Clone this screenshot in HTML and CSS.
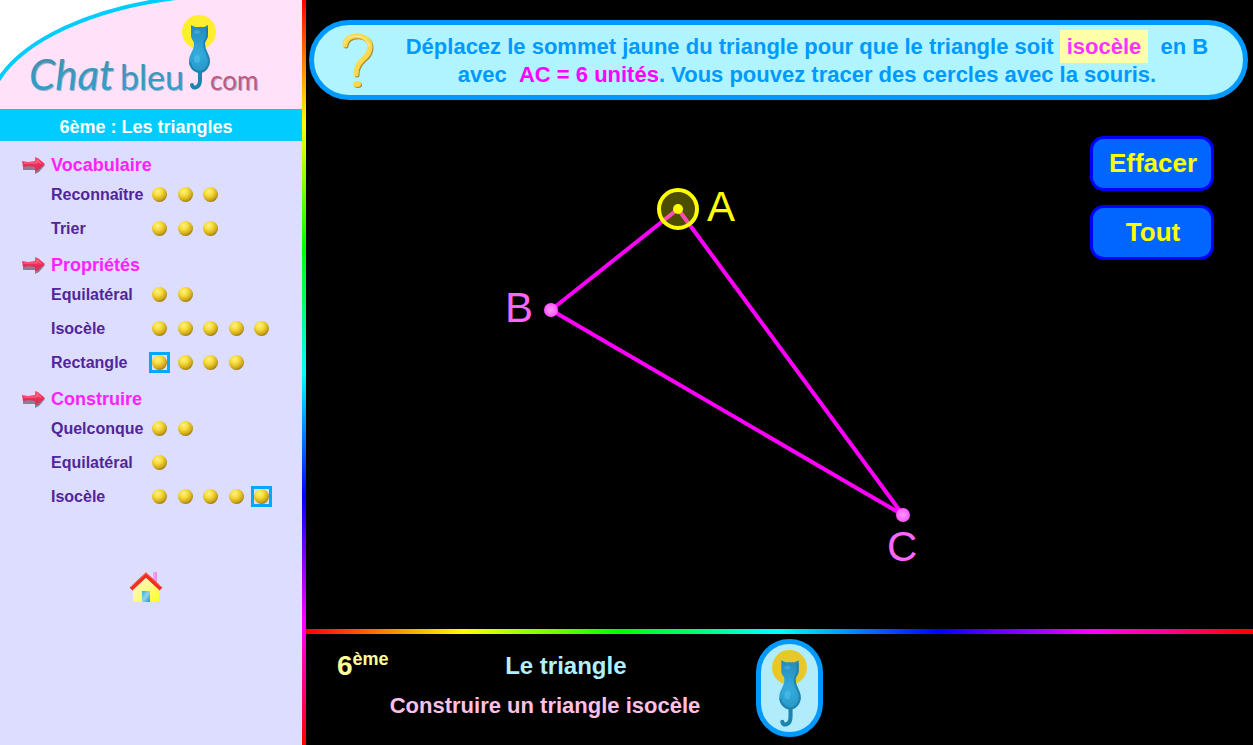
FILE: index.html
```html
<!DOCTYPE html>
<html lang="fr">
<head>
<meta charset="utf-8">
<title>Chat bleu - 6ème : Les triangles</title>
<link rel="stylesheet" href="styles.css">
</head>
<body>
<svg class="defs" aria-hidden="true">
  <defs>
    <radialGradient id="catBlue" gradientUnits="userSpaceOnUse" cx="18" cy="40" r="32"><stop offset="0" stop-color="#34aede"/><stop offset=".45" stop-color="#2a9ccc"/><stop offset="1" stop-color="#2288b8"/></radialGradient>
    <linearGradient id="script" x1="0" y1="0" x2="0" y2="1"><stop offset="0" stop-color="#4a8ca8"/><stop offset="1" stop-color="#28a4d8"/></linearGradient>
    <linearGradient id="arrowRed" x1="0" y1="0" x2="0" y2="1"><stop offset="0" stop-color="#ff5a78"/><stop offset=".6" stop-color="#ee2858"/><stop offset="1" stop-color="#c83860"/></linearGradient>
    <linearGradient id="wall" x1="0" y1="0" x2="1" y2="1"><stop offset="0" stop-color="#fffbd0"/><stop offset=".5" stop-color="#fff98a"/><stop offset="1" stop-color="#ffff20"/></linearGradient>
    <linearGradient id="door" x1="0" y1="0" x2="1" y2="1"><stop offset="0" stop-color="#38a8d0"/><stop offset=".5" stop-color="#90d8e8"/><stop offset="1" stop-color="#2090c0"/></linearGradient>
    <radialGradient id="point"><stop offset="0" stop-color="#ff99ff"/><stop offset="1" stop-color="#ff55ff"/></radialGradient>
    <symbol id="cat" viewBox="0 0 38 76">
      <circle cx="19" cy="18" r="17"/>
      <path d="M20 54 V66 C20 75 12 75 12 71" fill="none" stroke="#1c84b0" stroke-width="4" stroke-linecap="round"/>
      <path d="M11 11 L15 13 H24 L28 11 L28 21 C28 26 25 26 25 30 C25 37 30 40 30 47 C30 54 25 59 20 59 C14 59 9 54 9 47 C9 40 14 37 14 30 C14 26 11 26 11 21 Z" fill="url(#catBlue)"/>
      <path d="M27 14 V21 C27 25 24 26 24 30 C24 37 29 41 29 47 C29 53 24 58 20 58 C15 58 10 53 10 48" fill="none" stroke="#186f98" stroke-width="2" opacity=".55"/>
      <ellipse cx="17" cy="45" rx="3" ry="4" fill="#5cc4ec" opacity=".5"/>
      <ellipse cx="17" cy="18" rx="3" ry="2" fill="#5cc4ec" opacity=".4"/>
    </symbol>
    <symbol id="arrow" viewBox="0 0 24 17">
      <path d="M1 6 L13 5 L13 2 L16 3 L23 8 L17 15 L13 17 L13 13 L1 13 Z" fill="#755a6c" opacity=".75"/>
      <path d="M0 4 L6 5 L13 4 L13 0 L16 1 L23 7 L15 14 L13 14 L13 10 L7 9 L1 10 Z" fill="url(#arrowRed)"/>
      <path d="M2 6 H15 L15 3 L19 7" fill="none" stroke="#ff8098" opacity=".7"/>
    </symbol>
  </defs>
</svg>
<div class="app">
  <nav class="sidebar">
    <svg class="logo" viewBox="0 0 302 109" role="img" aria-label="Chat bleu .com">
      <rect width="302" height="109" fill="#ffe2f9"/>
      <path d="M0 0 H175 C100 10 28 34 0 80 Z" fill="#fff"/>
      <path d="M-4 84 C22 38 96 8 176 -2" fill="none" stroke="#00ccff" stroke-width="4"/>
      <g class="logo-shadow"><text x="30" y="91" class="script-big">Chat</text><text x="121" y="91" class="script-small">bleu</text><text x="211" y="91" class="script-com">com</text></g>
      <g fill="url(#script)"><text x="29" y="90" class="script-big">Chat</text><text x="120" y="90" class="script-small">bleu</text></g>
      <text x="210" y="90" class="script-com" fill="#c05880">com</text>
      <use href="#cat" x="180" y="14" width="38" height="76" fill="#ffee30"/>
    </svg>
    <h1 class="level">6ème : Les triangles</h1>
    <div class="menu">
      <section>
        <h2><svg class="arrow"><use href="#arrow"/></svg>Vocabulaire</h2>
        <div class="row"><span>Reconnaître</span><div class="balls"><a href="#" aria-label="Exercice 1"></a><a href="#" aria-label="Exercice 2"></a><a href="#" aria-label="Exercice 3"></a></div></div>
        <div class="row"><span>Trier</span><div class="balls"><a href="#" aria-label="Exercice 1"></a><a href="#" aria-label="Exercice 2"></a><a href="#" aria-label="Exercice 3"></a></div></div>
      </section>
      <section>
        <h2><svg class="arrow"><use href="#arrow"/></svg>Propriétés</h2>
        <div class="row"><span>Equilatéral</span><div class="balls"><a href="#" aria-label="Exercice 1"></a><a href="#" aria-label="Exercice 2"></a></div></div>
        <div class="row"><span>Isocèle</span><div class="balls"><a href="#" aria-label="Exercice 1"></a><a href="#" aria-label="Exercice 2"></a><a href="#" aria-label="Exercice 3"></a><a href="#" aria-label="Exercice 4"></a><a href="#" aria-label="Exercice 5"></a></div></div>
        <div class="row"><span>Rectangle</span><div class="balls"><a href="#" class="current" aria-label="Exercice 1"></a><a href="#" aria-label="Exercice 2"></a><a href="#" aria-label="Exercice 3"></a><a href="#" aria-label="Exercice 4"></a></div></div>
      </section>
      <section>
        <h2><svg class="arrow"><use href="#arrow"/></svg>Construire</h2>
        <div class="row"><span>Quelconque</span><div class="balls"><a href="#" aria-label="Exercice 1"></a><a href="#" aria-label="Exercice 2"></a></div></div>
        <div class="row"><span>Equilatéral</span><div class="balls"><a href="#" aria-label="Exercice 1"></a></div></div>
        <div class="row"><span>Isocèle</span><div class="balls"><a href="#" aria-label="Exercice 1"></a><a href="#" aria-label="Exercice 2"></a><a href="#" aria-label="Exercice 3"></a><a href="#" aria-label="Exercice 4"></a><a href="#" class="current" aria-label="Exercice 5"></a></div></div>
      </section>
    </div>
    <a class="home" href="#" aria-label="Accueil">
      <svg viewBox="0 0 34 32">
        <path d="M24 1 H28 V12 H24 Z" fill="#f5a0f0"/><path d="M27 1 V12" stroke="#e878e8"/>
        <path d="M4 17 L17 6 L30 17 V31 H4 Z" fill="url(#wall)"/>
        <path d="M2 18 L17 4 L32 18" fill="none" stroke="#f02c24" stroke-width="4"/>
        <path d="M2 16 L17 2 L32 16" fill="none" stroke="#ff6a5a" stroke-width="1"/>
        <rect x="13" y="20" width="8" height="11" fill="url(#door)"/>
      </svg>
    </a>
  </nav>
  <div class="rainbow-v"></div>
  <main>
    <header class="banner">
      <svg class="question" viewBox="0 0 34 56">
        <g fill="none" stroke-linecap="round" stroke-linejoin="round">
          <path d="M5 13 C5 1 30 0 30 15 C30 27 16 27 16 42" stroke="#a88838" stroke-width="5"/>
          <path d="M4 12 C4 0 29 -1 29 14 C29 26 15 26 15 41" stroke="#fcd84c" stroke-width="5"/>
          <path d="M3 11 C5 0 26 0 28 13" stroke="#fff0a0" stroke-width="1"/>
        </g>
        <ellipse cx="17" cy="52" rx="4" ry="3" fill="#a88838"/><ellipse cx="16" cy="51" rx="4" ry="3" fill="#fcd84c"/>
      </svg>
      <p>Déplacez le sommet jaune du triangle pour que le triangle soit <mark>isocèle</mark>&nbsp; en B<br>avec &nbsp;<strong>AC = 6 unités</strong>. Vous pouvez tracer des cercles avec la souris.</p>
    </header>
    <div class="stage">
      <svg class="figure" viewBox="0 0 784 529" role="img" aria-label="Triangle ABC">
        <path d="M372 109 L245 210 L597 415 Z" fill="none" stroke="#ff00ff" stroke-width="4" stroke-linejoin="round"/>
        <circle cx="245" cy="210" r="7" fill="url(#point)"/>
        <circle cx="597" cy="415" r="7" fill="url(#point)"/>
        <circle cx="372" cy="109" r="19" fill="#ffff00" fill-opacity=".3" stroke="#ffff00" stroke-width="4"/>
        <circle cx="372" cy="109" r="5" fill="#ffff00"/>
        <text x="401" y="121" fill="#ffff00">A</text>
        <text x="199" y="222" fill="#ff66ff">B</text>
        <text x="581" y="461" fill="#ff66ff">C</text>
      </svg>
      <div class="actions">
        <button type="button">Effacer</button>
        <button type="button">Tout</button>
      </div>
    </div>
    <div class="rainbow-h"></div>
    <footer>
      <div class="titles">
        <div class="topline"><span class="grade">6<sup>ème</sup></span><span class="theme">Le triangle</span></div>
        <p class="subject">Construire un triangle isocèle</p>
      </div>
      <a class="badge" href="#" aria-label="Chat bleu"><svg><use href="#cat" fill="#e8c828"/></svg></a>
    </footer>
  </main>
</div>
</body>
</html>
```
FILE: styles.css
```css
* { box-sizing: border-box; }
body { margin: 0; font-family: "Liberation Sans", Arial, sans-serif; font-weight: bold; background: #000; }
h1, h2, p { margin: 0; }
.defs { position: absolute; width: 0; height: 0; }
.app { display: flex; min-height: 100vh; }

.sidebar { flex: none; width: 302px; background: #ddddff; }
.logo { display: block; width: 100%; }
.logo text { font-family: Lato, sans-serif; font-weight: 400; }
.logo .script-big { font-size: 42px; font-style: italic; }
.logo .script-small { font-size: 34px; }
.logo .script-com { font-size: 26px; }
.logo-shadow { fill: #8898a8; opacity: .7; }
.level { padding: 5px 10px 0 0; background: #00ccff; color: #fff; font-size: 18px; line-height: 27px; text-align: center; }
.menu { display: grid; gap: 8px; padding: 12px 30px 0 22px; }
.menu h2 { display: flex; align-items: center; gap: 5px; height: 24px; padding-top: 1px; font-size: 18px; color: #ff22ff; }
.arrow { width: 24px; height: 17px; }
.row { display: flex; align-items: center; justify-content: space-between; height: 34px; padding-left: 29px; font-size: 16px; color: #512698; }
.row span { padding-top: 1px; }
.balls { display: grid; grid-template-columns: repeat(5, 21px); justify-content: space-between; width: 123px; }
.balls a { display: grid; place-items: center; height: 21px; }
.balls a::before { content: ""; width: 15px; height: 15px; border-radius: 50%; background: radial-gradient(circle at 38% 30%, #fff088 0, #f5dc38 30%, #d0a81c 60%, #5c3800 100%); }
.balls .current { border: 3px solid #00a8ff; }
.home { display: block; width: 34px; margin: 58px 0 0 129px; }
.home svg { display: block; width: 34px; height: 32px; }

.rainbow-v { flex: none; width: 4px; background: linear-gradient(#f00, #ff0, #0f0, #0ff, #00f, #f0f, #f00); }
.rainbow-h { height: 5px; background: linear-gradient(90deg, #f00, #ff0, #0f0, #0ff, #00f, #f0f, #f00); }

main { flex: 1; min-width: 0; display: flex; flex-direction: column; }
.banner { display: flex; align-items: center; min-height: 80px; margin: 20px 5px 0 3px; padding: 2px 4px 0 27px; border: 5px solid #0099ff; border-radius: 40px; background: #b0f4ff; }
.banner p { flex: 1; font-size: 22px; line-height: 28px; text-align: center; color: #0099ff; }
.banner mark { padding: 4px 7px; background: #ffffaa; color: #ff33ff; }
.banner strong { color: #ff00ff; }
.question { flex: none; width: 34px; height: 56px; }

.stage { flex: 1; min-height: 0; display: flex; }
.figure { flex: 1; min-width: 0; font-size: 42px; font-weight: normal; }
.actions { display: flex; flex-direction: column; gap: 14px; width: 124px; margin: 36px 39px 0 0; }
.actions button { height: 55px; padding: 0 0 0 2px; border: 3px solid #0000ff; border-radius: 14px; background: #0066ff; color: #ffff00; font: bold 26px "Liberation Sans", Arial, sans-serif; }

footer { display: flex; gap: 3px; padding: 5px 0 8px 31px; }
.titles { width: 416px; padding-top: 8px; }
.topline { display: flex; align-items: center; height: 38px; padding-right: 10px; }
.grade { font-size: 28px; line-height: 38px; color: #ffff99; }
.grade sup { font-size: 18px; line-height: 0; }
.theme { flex: 1; font-size: 24px; text-align: center; color: #b0f0ff; }
.subject { font-size: 22px; line-height: 42px; text-align: center; color: #ffc0e8; }
.badge { display: grid; place-items: center; width: 67px; height: 98px; border: 5px solid #0099ff; border-radius: 34px; background: #b0ecfc; }
.badge svg { width: 39px; height: 78px; }
```
